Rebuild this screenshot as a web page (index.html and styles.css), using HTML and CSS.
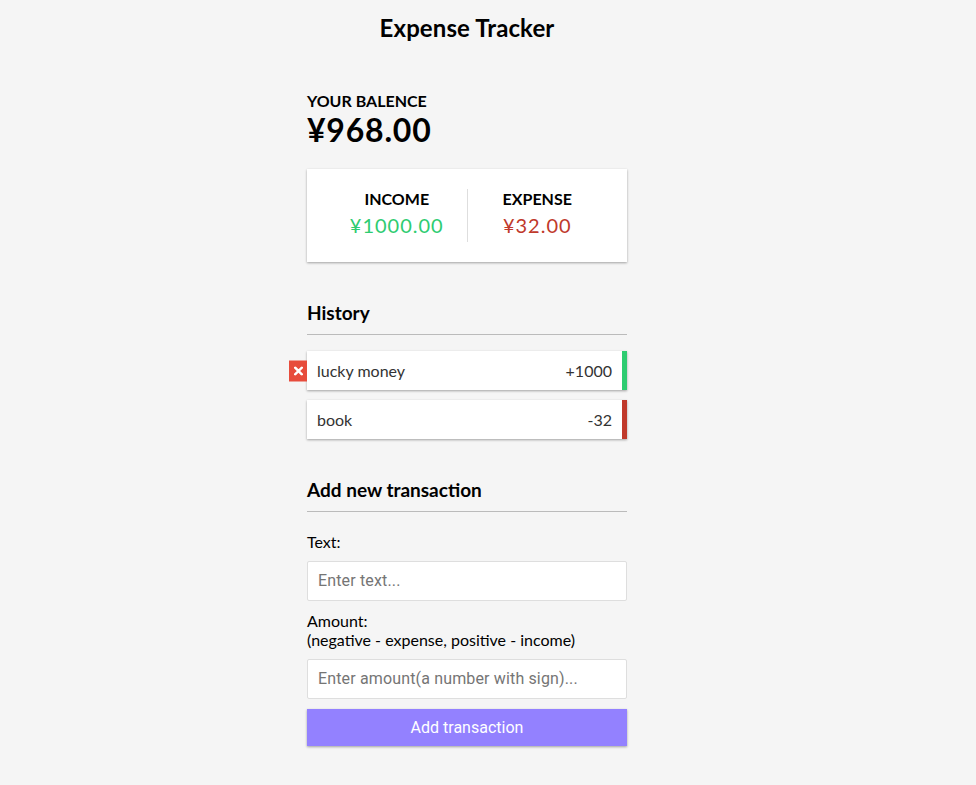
FILE: index.html
```html
<!DOCTYPE html>
<html lang="en">
<head>
<meta charset="UTF-8">
<title>Expense Tracker</title>
<link rel="stylesheet" href="styles.css">
</head>
<body>
  <h2 class="title">Expense Tracker</h2>
  <div class="container">
    <h4>Your Balence</h4>
    <h1 class="balance">¥968.00</h1>

    <div class="inc-exp-container">
      <div>
        <h4>Income</h4>
        <p class="money plus">¥1000.00</p>
      </div>
      <div>
        <h4>Expense</h4>
        <p class="money minus">¥32.00</p>
      </div>
    </div>

    <h3>History</h3>
    <ul class="list">
      <li class="plus">lucky money <span>+1000</span><button class="delete-btn visible" aria-label="delete"><svg width="9" height="9" viewBox="0 0 9 9"><path d="M1.2 1.2L7.8 7.8M7.8 1.2L1.2 7.8" stroke="#fff" stroke-width="2.4" stroke-linecap="square"/></svg></button></li>
      <li class="minus">book <span>-32</span><button class="delete-btn" aria-label="delete"><svg width="9" height="9" viewBox="0 0 9 9"><path d="M1.2 1.2L7.8 7.8M7.8 1.2L1.2 7.8" stroke="#fff" stroke-width="2.4" stroke-linecap="square"/></svg></button></li>
    </ul>

    <h3>Add new transaction</h3>
    <form class="form">
      <div class="form-control">
        <label for="text">Text:</label>
        <input type="text" id="text" placeholder="Enter text...">
      </div>
      <div class="form-control">
        <label for="amount">Amount:<br>(negative - expense, positive - income)</label>
        <input type="text" id="amount" placeholder="Enter amount(a number with sign)...">
      </div>
      <button type="button" class="btn">Add transaction</button>
    </form>
  </div>
</body>
</html>
```

FILE: styles.css
```css
* { box-sizing: border-box; }

body {
  background-color: #f5f5f5;
  margin: 0;
  padding-right: 42px;
  display: flex;
  flex-direction: column;
  align-items: center;
  font-family: "Lato", "Noto Sans", sans-serif;
  color: #000;
}

.title {
  margin: 0;
  padding-top: 14px;
  font-size: 24px;
  line-height: 28px;
  letter-spacing: 0.1px;
  font-weight: 700;
}

.container {
  width: 320px;
  margin-top: 49px;
}

h4 {
  margin: 0;
  font-size: 16px;
  line-height: 19px;
  text-transform: uppercase;
  font-weight: 700;
}

.balance {
  margin: 0;
  font-size: 32px;
  line-height: 39px;
  letter-spacing: 0.8px;
  font-weight: 700;
}

.inc-exp-container {
  background-color: #fff;
  box-shadow: 0 1px 3px rgba(0,0,0,0.12), 0 1px 2px rgba(0,0,0,0.24);
  padding: 20px;
  display: flex;
  margin: 20px 0;
}

.inc-exp-container > div {
  flex: 1;
  text-align: center;
}

.inc-exp-container > div:first-of-type {
  border-right: 1px solid #dedede;
}

.money {
  font-size: 20px;
  line-height: 24px;
  letter-spacing: 1px;
  margin: 5px 0;
}

.money.plus { color: #2ecc71; }
.money.minus { color: #c0392b; }

h3 {
  border-bottom: 1px solid #bbb;
  padding-bottom: 10px;
  margin: 40px 0 10px;
  font-size: 19px;
  line-height: 22px;
  font-weight: 700;
}

.list {
  list-style-type: none;
  padding: 0;
  margin: 16px 0 40px;
}

.list li {
  background-color: #fff;
  box-shadow: 0 1px 3px rgba(0,0,0,0.12), 0 1px 2px rgba(0,0,0,0.24);
  color: #333;
  display: flex;
  justify-content: space-between;
  position: relative;
  padding: 10px;
  margin: 10px 0;
  font-size: 16px;
  line-height: 19px;
}

.list li:first-child { margin-top: 0; }

.list li.plus { border-right: 5px solid #2ecc71; }
.list li.minus { border-right: 5px solid #c0392b; }

.delete-btn {
  background-color: #e74c3c;
  border: 0;
  width: 18px;
  height: 21px;
  padding: 0;
  display: flex;
  align-items: center;
  justify-content: center;
  position: absolute;
  top: 50%;
  left: 0;
  transform: translate(-100%, -50%);
  opacity: 0;
}

.delete-btn svg { display: block; }

.delete-btn.visible { opacity: 1; }

label {
  display: inline-block;
  margin: 10px 0;
  font-size: 16px;
  line-height: 19px;
}

input[type='text'] {
  border: 1px solid #dedede;
  border-radius: 2px;
  display: block;
  font-family: "Roboto", "Liberation Sans", sans-serif;
  font-size: 16px;
  line-height: 18px;
  letter-spacing: 0.15px;
  padding: 10px;
  width: 100%;
  background: #fff;
}

input::placeholder { color: #757575; }

.btn {
  background-color: #9381ff;
  box-shadow: 0 1px 3px rgba(0,0,0,0.12), 0 1px 2px rgba(0,0,0,0.24);
  color: #fff;
  border: 0;
  display: block;
  font-family: "Roboto", "Liberation Sans", sans-serif;
  font-size: 16px;
  line-height: 17px;
  margin: 10px 0 30px;
  padding: 10px;
  width: 100%;
}
```
